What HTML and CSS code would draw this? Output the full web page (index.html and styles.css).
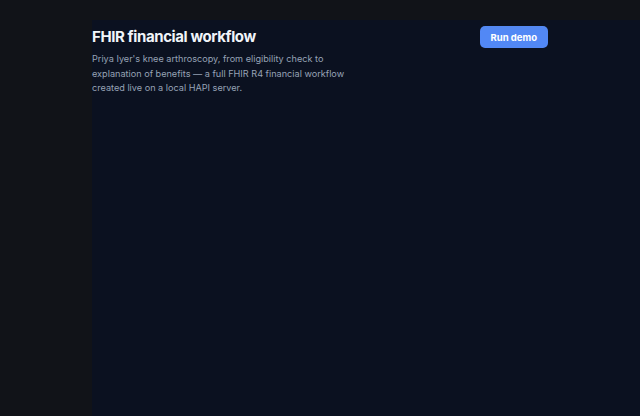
FILE: index.html
```html
<!DOCTYPE html>
<html lang="en">
<head>
<meta charset="utf-8">
<title>FHIR financial workflow</title>
<link rel="stylesheet" href="styles.css">
</head>
<body>
<main class="panel">
  <div class="container">
    <header class="header">
      <div class="intro">
        <h1 class="title">FHIR financial workflow</h1>
        <p class="lead">Priya Iyer's knee arthroscopy, from eligibility check to explanation of benefits — a full FHIR R4 financial workflow created live on a local HAPI server.</p>
      </div>
      <button class="run-btn" type="button">Run demo</button>
    </header>
  </div>
</main>
</body>
</html>
```

FILE: styles.css
```css
html, body {
  margin: 0;
  padding: 0;
  height: 100%;
}
body {
  background: #111318;
  font-family: Inter, "Noto Sans", "Liberation Sans", sans-serif;
  overflow: hidden;
}
.panel {
  margin: 20px 0 0 92px;
  min-height: calc(100% - 20px);
  background: #0b1120;
  box-sizing: border-box;
  padding-top: 6px;
}
.container {
  width: 456px;
}
.header {
  display: flex;
  justify-content: space-between;
  align-items: flex-start;
}
.title {
  margin: 0;
  font-size: 15px;
  line-height: 22px;
  font-weight: 700;
  color: #f1f5f9;
  letter-spacing: -0.4px;
}
.lead {
  margin: 4px 0 0;
  max-width: 262px;
  font-size: 9.15px;
  line-height: 14.7px;
  color: #97a3b6;
}
.run-btn {
  height: 22px;
  padding: 0 11px;
  border: 0;
  border-radius: 5px;
  background: #5288f5;
  color: #ffffff;
  font-family: inherit;
  font-size: 9.5px;
  font-weight: 700;
  cursor: pointer;
}
```
